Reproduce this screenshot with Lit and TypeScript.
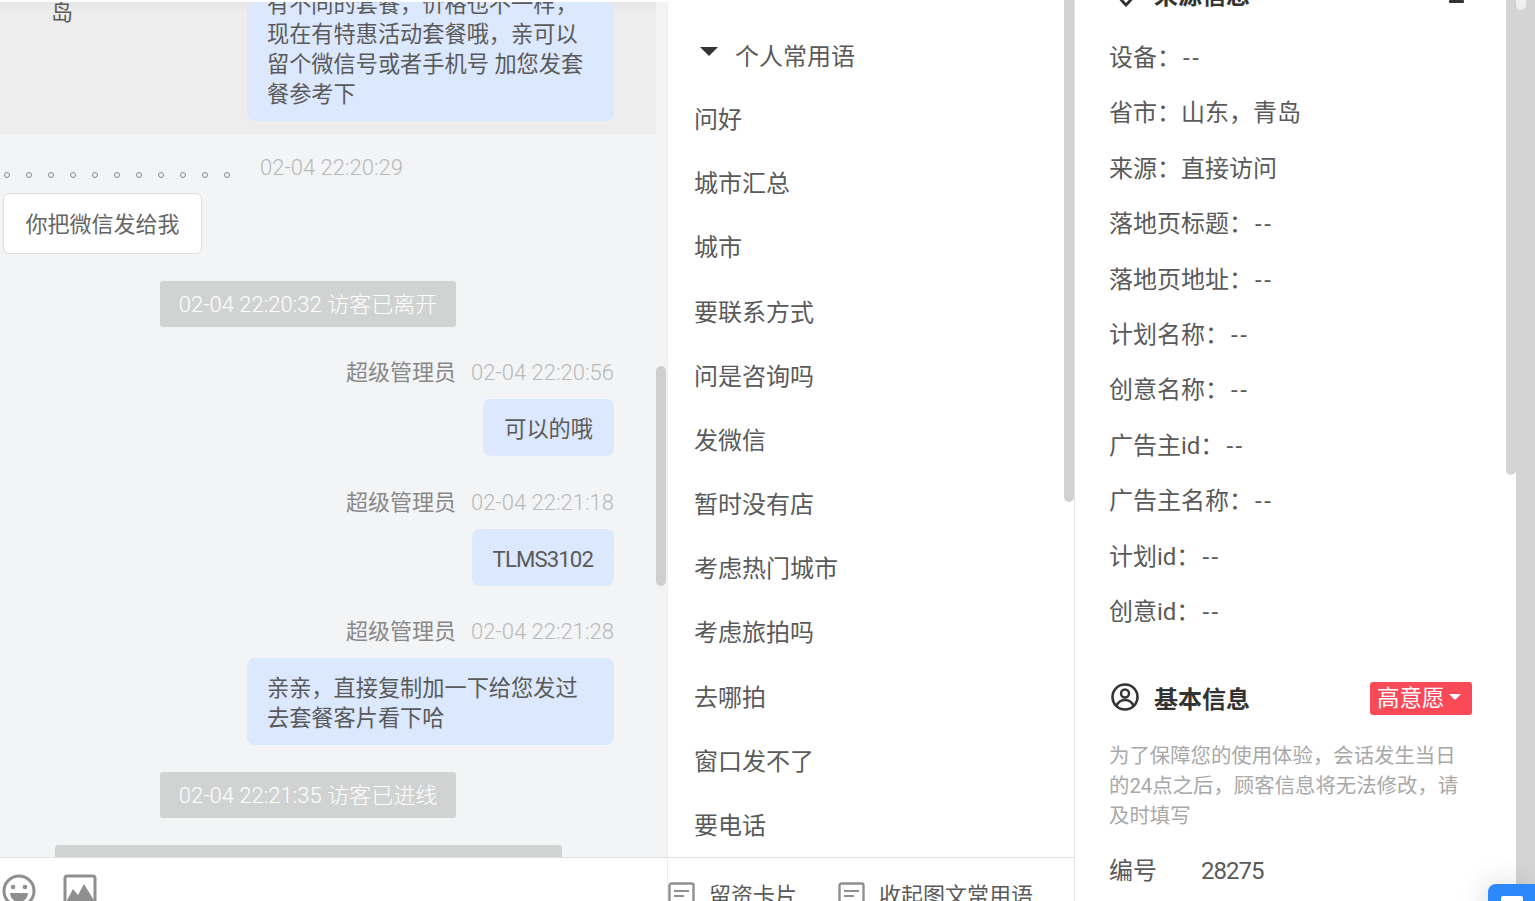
import { LitElement, html, css, svg } from "lit";
import { customElement } from "lit/decorators.js";

const phrases = ["问好","城市汇总","城市","要联系方式","问是咨询吗","发微信","暂时没有店","考虑热门城市","考虑旅拍吗","去哪拍","窗口发不了","要电话"];
const info: [string, string][] = [["设备：",""],["省市：山东，青岛","none"],["来源：直接访问","none"],["落地页标题：",""],["落地页地址：",""],["计划名称：",""],["创意名称：",""],["广告主id：",""],["广告主名称：",""],["计划id：",""],["创意id：",""]];

const docIcon = svg`<svg class="doc" viewBox="0 0 27 27" width="27" height="27"><rect x="1.5" y="1.500" width="24" height="24" rx="2" fill="none" stroke="#8f8f8f" stroke-width="2.4"/><path d="M6 9h15M6 14h10" stroke="#8f8f8f" stroke-width="2" fill="none"/></svg>`;

@customElement("app-root")
export class AppRoot extends LitElement {
  static styles = css`
    :host { display: block; width: 1535px; height: 901px; overflow: hidden; background: #fff; font-family: Roboto, "Noto Sans CJK SC", sans-serif; color: #5a5a5a; font-size: 24px; }
    .page { display: grid; grid-template-columns: 668px 407px 431px 10px 19px; height: 901px; position: relative; overflow: hidden; }
    .chat { display: flex; flex-direction: column; min-width: 0; height: 901px; font-size: 22px; }
    .log { height: 857px; background: #f3f4f6; overflow: hidden; position: relative; flex: none; }
    .top-shade { height: 2px; background: #fff; position: relative; z-index: 1; }
    .hi { height: 132px; width: 656px; background: linear-gradient(#e6e6e6, #ededed 10px); display: flex; justify-content: space-between; align-items: flex-start; box-sizing: border-box; }
    .hi .who { margin: -4px 0 0 51px; line-height: 30px; }
    .bubble { background: #dce8fe; border-radius: 8px; line-height: 30px; box-sizing: border-box; white-space: nowrap; font-size: 22.2px; }
    .hi .bubble { width: 367px; height: 119px; margin: 0 42px 0 0; padding: 0 20px; overflow: hidden; }
    .hi .bubble p { margin: -13px 0 0; }
    .meta { color: #b9b9b9; line-height: 30px; font-weight: 300; }
    .vis-meta { display: flex; align-items: center; height: 30px; margin-top: 19px; }
    .dots { display: flex; gap: 16px; margin: 14px 0 0 4px; width: 228px; }
    .dots i { width: 6px; height: 6px; border: 1.5px solid #8a8a8a; border-radius: 50%; box-sizing: border-box; }
    .vis-meta .meta { margin-left: 28px; }
    .vbubble { margin: 10px 0 0 3px; width: 199px; height: 61px; box-sizing: border-box; background: #fff; border: 1px solid #ddd; border-radius: 6px; text-align: center; line-height: 61px; color: #666; }
    .sys { width: 296px; height: 46px; margin: 27px 0 0 160px; background: #d1d3d2; border-radius: 3px; color: #fff; line-height: 48px; text-align: center; white-space: nowrap; font-weight: 300; }
    .me { display: flex; flex-direction: column; align-items: flex-end; width: 614px; margin-top: 31px; }
    .me.m2 { margin-top: 32px; }
    .me .head { display: flex; gap: 15px; line-height: 30px; color: #888; }
    .me .bubble { padding: 15px 21px 12px; margin-top: 11px; }
    .code { letter-spacing: -.9px; }
    .wide { width: 367px; }
    .me .bubble.wide { padding-left: 20px; }
    .last { width: 507px; height: 20px; margin: 27px 0 0 55px; background: #d1d3d2; border-radius: 3px 3px 0 0; }
    .sb1 { position: absolute; left: 656px; top: 366px; width: 10px; height: 220px; background: #cfcfcf; border-radius: 5px; }
    .tools { flex: 1; border-top: 1px solid #e0e0e0; display: flex; gap: 25px; padding: 16px 0 0 2px; overflow: hidden; background: #fff; }
    .mid { border-right: 1px solid #e6e6e6; border-left: 1px solid #ececec; margin-left: -1px; display: flex; flex-direction: column; min-width: 0; height: 901px; box-sizing: border-box; position: relative; }
    .mid-scroll { height: 857px; overflow: hidden; flex: none; padding: 0 0 0 26px; box-sizing: border-box; }
    .group { display: flex; align-items: center; height: 30px; margin: 39px 0 34px 6px; gap: 17px; }
    .group i { width: 0; height: 0; border-left: 9px solid transparent; border-right: 9px solid transparent; border-top: 9px solid #333; margin-top: -5px; }
    .ph { height: 64.18px; line-height: 34px; }
    .sb2 { position: absolute; left: 396px; top: 0; width: 10px; height: 502px; background: #d2d2d2; border-radius: 0 0 5px 5px; }
    .mid-foot { flex: 1; border-top: 1px solid #e0e0e0; display: flex; gap: 41px; padding: 24px 0 0 0; overflow: hidden; white-space: nowrap; font-size: 22px; margin-right: -1px; }
    .mid-foot span { display: inline-flex; gap: 14px; align-items: flex-start; }
    .mid-foot span b { font-weight: 400; margin-top: -1px; line-height: 30px; }
    .right { padding: 0 34px; box-sizing: border-box; height: 901px; overflow: hidden; }
    .sec { display: flex; align-items: center; height: 30px; margin-top: -22px; position: relative; }
    .sec svg { margin-left: 3px; }
    .sec strong { font-weight: 700; color: #333; margin-left: 14px; }
    .sec .minus { position: absolute; right: 8px; bottom: 5px; width: 15px; height: 3px; background: #333; border-radius: 1px; }
    .row { height: 55.4px; line-height: 34px; white-space: nowrap; }
    .dash { letter-spacing: 2.5px; margin-left: 2px; }
    .rows { margin-top: 33px; }
    .basic { margin-top: 30px; display: flex; align-items: center; height: 34px; }
    .basic svg { margin-left: 1px; }
    .basic strong { font-weight: 700; color: #333; margin-left: 14px; flex: 1; }
    .tag { width: 102px; height: 33px; margin-top: 2px; background: #fa4a58; border-radius: 3px; color: #fff; display: flex; align-items: center; padding-left: 7px; box-sizing: border-box; line-height: 33px; gap: 4px; font-size: 22.5px; }
    .tag i { width: 0; height: 0; border-left: 6px solid transparent; border-right: 6px solid transparent; border-top: 6px solid #fff; margin-top: -2px; }
    .note { margin: 27px 0 0; font-size: 20.4px; line-height: 30px; color: #a8a8a8; }
    .id { display: flex; margin-top: 23px; line-height: 34px; }
    .id span:first-child { width: 92px; }
    .id span:last-child { letter-spacing: -1px; }
    .gutter { position: relative; }
    .thumb { position: absolute; left: 0; top: 0; width: 10px; height: 475px; background: #d4d4d4; border-radius: 0 0 5px 5px; }
    .rail { background: #d4d4d4; position: relative; }
    .notch { position: absolute; left: 0; top: 0; width: 10px; height: 10px; background: #eee; border-radius: 0 0 5px 5px; }
    .fab { position: absolute; left: 1488px; top: 884px; width: 47px; height: 40px; background: #2d88fb; border-radius: 8px 0 0 0; box-shadow: -6px -4px 24px rgba(0,0,0,.10); }
    .fab i { position:absolute; left: 13px; top: 12px; width: 22px; height: 12px; background:#fff; border-radius:2px; }
  `;

  render() {
    return html`<div class="page">
      <section class="chat">
        <div class="log">
          <div class="top-shade"></div>
          <div class="hi">
            <div class="who">岛</div>
            <div class="bubble"><p>有不同的套餐，价格也不一样，<br>现在有特惠活动套餐哦，亲可以<br>留个微信号或者手机号 加您发套<br>餐参考下</p></div>
          </div>
          <div class="vis-meta"><div class="dots">${Array.from({length:11},()=>html`<i></i>`)}</div><span class="meta">02-04 22:20:29</span></div>
          <div class="vbubble">你把微信发给我</div>
          <div class="sys">02-04 22:20:32 访客已离开</div>
          <div class="me"><div class="head"><span>超级管理员</span><span class="meta">02-04 22:20:56</span></div><div class="bubble">可以的哦</div></div>
          <div class="me m2"><div class="head"><span>超级管理员</span><span class="meta">02-04 22:21:18</span></div><div class="bubble code">TLMS3102</div></div>
          <div class="me"><div class="head"><span>超级管理员</span><span class="meta">02-04 22:21:28</span></div><div class="bubble wide">亲亲，直接复制加一下给您发过<br>去套餐客片看下哈</div></div>
          <div class="sys">02-04 22:21:35 访客已进线</div>
          <div class="last"></div>
          <div class="sb1"></div>
        </div>
        <div class="tools">
          <svg viewBox="0 0 36 36" width="36" height="36"><circle cx="17" cy="17" r="15" fill="none" stroke="#8f8f8f" stroke-width="3"/><circle cx="11" cy="13" r="2.3" fill="#8f8f8f"/><circle cx="23" cy="13" r="2.3" fill="#8f8f8f"/><path d="M8 19h18c-.5 6-4.500 9-9 9s-8.500-3-9-9z" fill="#8f8f8f"/></svg>
          <svg viewBox="0 0 36 36" width="36" height="36"><rect x="2" y="2" width="30" height="32" rx="2" fill="#fff" stroke="#8f8f8f" stroke-width="3"/><path d="M2 30 L10 15 L15 21 L21 10 L32 28 V34 H2z" fill="#8f8f8f"/></svg>
        </div>
      </section>
      <section class="mid">
        <div class="mid-scroll">
          <div class="group"><i></i><span>个人常用语</span></div>
          ${phrases.map(p => html`<div class="ph">${p}</div>`)}
        </div>
        <div class="sb2"></div>
        <div class="mid-foot">
          <span>${docIcon}<b>留资卡片</b></span>
          <span>${docIcon}<b>收起图文常用语</b></span>
        </div>
      </section>
      <section class="right">
        <div class="sec">
          <svg viewBox="0 0 28 28" width="28" height="28"><path d="M14 26C8 20 4 15 4 10a10 10 0 0 1 20 0c0 5-4 10-10 16z" fill="none" stroke="#333" stroke-width="3"/></svg>
          <strong>来源信息</strong><span class="minus"></span>
        </div>
        <div class="rows">${info.map(([t, v]) => html`<div class="row">${t}${v === "none" ? "" : html`<span class="dash">--</span>`}</div>`)}</div>
        <div class="basic">
          <svg viewBox="0 0 30 30" width="30" height="30"><circle cx="15" cy="15" r="12.500" fill="none" stroke="#333" stroke-width="2.600"/><circle cx="15" cy="11.500" r="4" fill="none" stroke="#333" stroke-width="2.400"/><path d="M6.500 24c1.500-4 5-6 8.500-6s7 2 8.500 6" fill="none" stroke="#333" stroke-width="2.400"/></svg>
          <strong>基本信息</strong>
          <div class="tag">高意愿<i></i></div>
        </div>
        <div class="note">为了保障您的使用体验，会话发生当日的24点之后，顾客信息将无法修改，请及时填写</div>
        <div class="id"><span>编号</span><span>28275</span></div>
      </section>
      <div class="gutter"><div class="thumb"></div></div>
      <aside class="rail"><div class="notch"></div></aside>
      <div class="fab"><i></i></div>
    </div>`;
  }
}
